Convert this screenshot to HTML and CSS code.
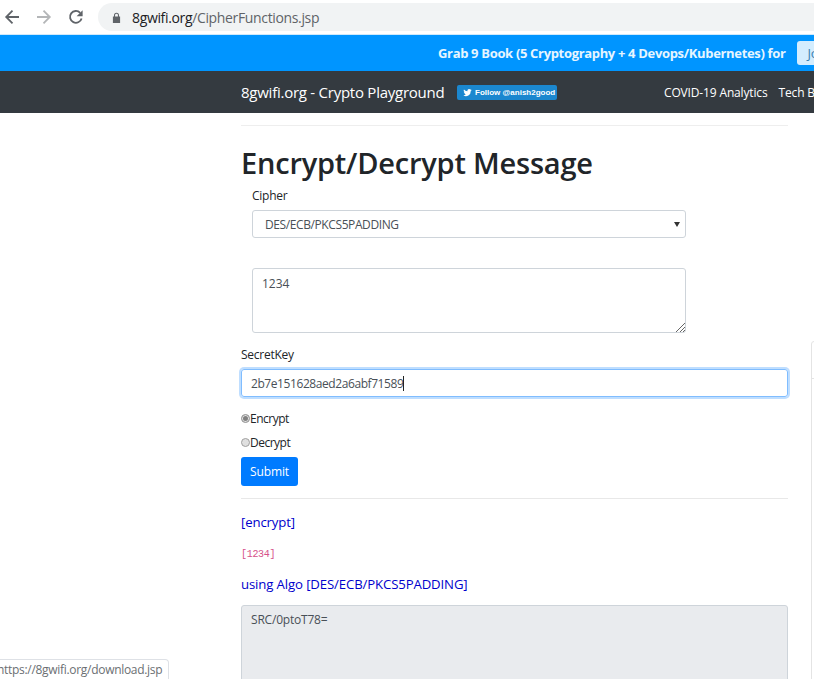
FILE: index.html
```html
<!DOCTYPE html>
<html lang="en">

<head>
    <meta charset="UTF-8">
    <title>Encrypt/Decrypt Message</title>
    <link rel="stylesheet" href="styles.css">
</head>

<body>
    <!-- Browser toolbar -->
    <div class="toolbar">
        <svg class="tool-icon" viewBox="0 0 16 16"><path d="M15 8H2.500M8.500 1.700 2.200 8l6.300 6.300" fill="none" stroke="#5f6368" stroke-width="1.800"/></svg>
        <svg class="tool-icon" viewBox="0 0 16 16"><path d="M1 8h12.500M7.500 1.700 13.800 8l-6.300 6.300" fill="none" stroke="#b4b6b8" stroke-width="1.800"/></svg>
        <svg class="tool-icon" viewBox="0 0 16 16"><path d="M13.600 9.500A5.900 5.900 0 1 1 12.200 3.800" fill="none" stroke="#5f6368" stroke-width="1.800"/><path d="M14.600 1.200v6h-6z" fill="#5f6368"/></svg>
        <div class="address">
            <svg class="lock" viewBox="0 0 10 12"><path d="M2.200 5V3.400a2.800 2.800 0 0 1 5.600 0V5H9v7H1V5zM3.400 5h3.200V3.400a1.600 1.600 0 0 0-3.200 0z" fill="#5f6368"/></svg>
            <span class="host">8gwifi.org</span><span class="path">/CipherFunctions.jsp</span>
        </div>
    </div>

    <!-- Promo banner -->
    <div class="promo">
        <strong>Grab 9 Book (5 Cryptography + 4 Devops/Kubernetes) for</strong>
        <a class="promo-btn" href="#">Join</a>
    </div>

    <!-- Navbar -->
    <nav class="navbar">
        <a class="brand" href="#">8gwifi.org - Crypto Playground</a>
        <a class="follow" href="#">
            <svg class="bird" viewBox="0 0 24 24"><path d="M23 5a9 9 0 0 1-2.600.7 4.500 4.500 0 0 0 2-2.500 9 9 0 0 1-2.900 1.100 4.500 4.500 0 0 0-7.700 4.100A12.800 12.800 0 0 1 2.500 3.700a4.500 4.500 0 0 0 1.400 6 4.500 4.500 0 0 1-2-.6 4.500 4.500 0 0 0 3.600 4.500 4.500 4.500 0 0 1-2 .1 4.500 4.500 0 0 0 4.200 3.100A9 9 0 0 1 1 19.700 12.800 12.800 0 0 0 20.700 8.300 9 9 0 0 0 23 5z" fill="#fff"/></svg>
            Follow @anish2good
        </a>
        <a class="nav-link covid" href="#">COVID-19 Analytics</a>
        <a class="nav-link" href="#">Tech Blog</a>
    </nav>

    <!-- Page content -->
    <main class="content">
        <hr class="rule-top">
        <h1>Encrypt/Decrypt Message</h1>

        <div class="inset">
            <label class="field-label">Cipher</label>
            <div class="select-box">
                <span>DES/ECB/PKCS5PADDING</span>
                <span class="caret"></span>
            </div>
            <div class="textarea-box">
                1234
                <svg class="grip" viewBox="0 0 9 9"><path d="M0 9 9 0M4 9l5-5M7 9l2-2" stroke="#666" stroke-width="1"/></svg>
            </div>
        </div>

        <label class="field-label">SecretKey</label>
        <div class="key-input">2b7e151628aed2a6abf71589<span class="text-cursor"></span></div>

        <div class="radio-row"><span class="radio checked"></span>Encrypt</div>
        <div class="radio-row"><span class="radio"></span>Decrypt</div>
        <button class="submit">Submit</button>

        <hr class="rule-bottom">

        <p class="result-line">[encrypt]</p>
        <p class="result-code">[1234]</p>
        <p class="result-line">using Algo [DES/ECB/PKCS5PADDING]</p>
        <div class="output-box">SRC/0ptoT78=</div>
    </main>

    <!-- Overlays -->
    <div class="side-panel"></div>
    <div class="status-bubble">https://8gwifi.org/download.jsp</div>
</body>

</html>
```

FILE: styles.css
```css
html,
body {
    height: 100%;
}

body {
    margin: 0;
    position: relative;
    height: 679px;
    overflow: hidden;
    background: #fff;
    color: #212529;
    font-family: "Open Sans", "Noto Sans", Arial, sans-serif;
    font-size: 12px;
}

.toolbar {
    height: 34px;
    padding-left: 4px;
    display: flex;
    align-items: center;
    gap: 16px;
    background: #fff;
}

.tool-icon {
    width: 16px;
    height: 16px;
    flex-shrink: 0;
}

.address {
    flex: 1;
    height: 28px;
    margin-left: -2px;
    padding-left: 14px;
    display: flex;
    align-items: center;
    background: #f1f3f4;
    border-radius: 14px 0 0 14px;
    font-size: 14px;
    letter-spacing: -0.35px;
}

.lock {
    width: 9px;
    height: 11px;
    margin-right: 11px;
}

.host {
    color: #202124;
}

.path {
    color: #5f6368;
}

.promo {
    height: 37px;
    border-top: 1px solid #cfe9fb;
    box-sizing: border-box;
    padding-left: 438px;
    display: flex;
    align-items: center;
    white-space: nowrap;
    background: #0095ff;
    color: #e6f5ff;
    font-size: 13px;
    letter-spacing: -0.33px;
}

.promo-btn {
    margin-left: 11px;
    width: 60px;
    height: 24px;
    padding-left: 11px;
    flex-shrink: 0;
    line-height: 24px;
    background: #d4edfe;
    border-radius: 3px;
    color: #3a7fb0;
    text-decoration: none;
}

.navbar {
    height: 42px;
    padding-left: 241px;
    display: flex;
    align-items: center;
    white-space: nowrap;
    background: #343a40;
}

.brand {
    width: 216px;
    flex-shrink: 0;
    color: #fff;
    font-size: 15px;
    text-decoration: none;
    letter-spacing: -0.25px;
}

.follow {
    width: 100px;
    height: 15px;
    flex-shrink: 0;
    display: flex;
    align-items: center;
    gap: 3px;
    box-sizing: border-box;
    padding-left: 6px;
    background: #1b87cf;
    border-radius: 2px;
    color: #fff;
    font-family: "Liberation Sans", Arial, sans-serif;
    font-size: 8px;
    font-weight: bold;
    text-decoration: none;
}

.bird {
    width: 9px;
    height: 9px;
}

.nav-link {
    flex-shrink: 0;
    color: #fff;
    font-size: 12px;
    text-decoration: none;
    letter-spacing: -0.15px;
}

.covid {
    margin-left: 107px;
    margin-right: 11px;
}

.content {
    width: 547px;
    margin-left: 241px;
}

.rule-top {
    margin: 12px 0 0;
    border: 0;
    border-top: 1px solid #eeeeee;
}

h1 {
    margin: 17px 0 0;
    height: 39px;
    font-size: 29px;
    line-height: 39px;
    font-weight: 600;
    letter-spacing: -0.21px;
}

.inset {
    padding: 0 102px 0 11px;
    margin-top: 4px;
}

.field-label {
    display: block;
    height: 20px;
    line-height: 20px;
    color: #212529;
    letter-spacing: -0.25px;
}

.select-box {
    height: 26px;
    margin-top: 4px;
    padding: 0 5px 0 12px;
    display: flex;
    align-items: center;
    justify-content: space-between;
    border: 1px solid #ced4da;
    border-radius: 3px;
    color: #495057;
    letter-spacing: -0.4px;
}

.caret {
    width: 0;
    height: 0;
    border-left: 3px solid transparent;
    border-right: 3px solid transparent;
    border-top: 5px solid #333;
}

.textarea-box {
    position: relative;
    height: 57px;
    margin-top: 30px;
    padding: 6px 9px 0;
    border: 1px solid #ced4da;
    border-radius: 3px;
    color: #495057;
}

.grip {
    position: absolute;
    right: 0;
    bottom: 0;
    width: 9px;
    height: 9px;
}

.inset + .field-label {
    margin-top: 12px;
}

.key-input {
    height: 26px;
    margin-top: 4px;
    padding-left: 9px;
    display: flex;
    align-items: center;
    border: 1px solid #80bdff;
    border-radius: 3px;
    box-shadow: 0 0 0 2px rgba(0, 123, 255, 0.25);
    color: #495057;
    letter-spacing: -0.42px;
}

.text-cursor {
    width: 1px;
    height: 15px;
    background: #222;
}

.radio-row {
    display: flex;
    align-items: center;
    height: 24px;
    letter-spacing: -0.5px;
}

.key-input + .radio-row {
    margin-top: 9px;
}

.radio {
    width: 7px;
    height: 7px;
    border: 1px solid #a0a0a0;
    border-radius: 50%;
    background: #e0e0e0;
}

.radio.checked {
    background: #808080;
    box-shadow: inset 0 0 0 1px #e4e4e4;
}

.submit {
    display: block;
    width: 57px;
    height: 29px;
    margin-top: 3px;
    padding: 0;
    border: 0;
    border-radius: 3px;
    background: #007bff;
    color: #fff;
    font-family: inherit;
    font-size: 12px;
    letter-spacing: -0.1px;
}

.rule-bottom {
    margin: 12px 0 0;
    border: 0;
    border-top: 1px solid #e8e8e8;
}

.result-line {
    margin: 14px 0 0;
    height: 18px;
    line-height: 18px;
    color: #0000cc;
    font-size: 13.200px;
    letter-spacing: -0.13px;
}

.result-code {
    margin: 16px 0 0;
    height: 16px;
    line-height: 16px;
    color: #d6518a;
    font-family: "Liberation Mono", monospace;
    font-size: 10px;
    letter-spacing: -0.3px;
}

.result-code + .result-line {
    margin-top: 12px;
}

.output-box {
    height: 100px;
    margin-top: 12px;
    padding: 5px 9px;
    border: 1px solid #ced4da;
    border-radius: 3px;
    background: #e9ebee;
    color: #495057;
    letter-spacing: -0.2px;
}

.side-panel {
    position: absolute;
    left: 811px;
    top: 341px;
    width: 10px;
    height: 400px;
    border: 1px solid #e4e4e4;
    border-radius: 3px 0 0 0;
    background: linear-gradient(#fff 36px, #e4e4e4 36px, #e4e4e4 37px, #fff 37px);
}

.status-bubble {
    position: absolute;
    left: -9px;
    bottom: 0;
    height: 19px;
    padding: 0 6px 0 5px;
    line-height: 19px;
    border: 1px solid #dee1e6;
    border-bottom: 0;
    border-radius: 0 4px 0 0;
    background: #fff;
    color: #6b6f73;
    font-size: 12px;
    letter-spacing: -0.3px;
}
```
